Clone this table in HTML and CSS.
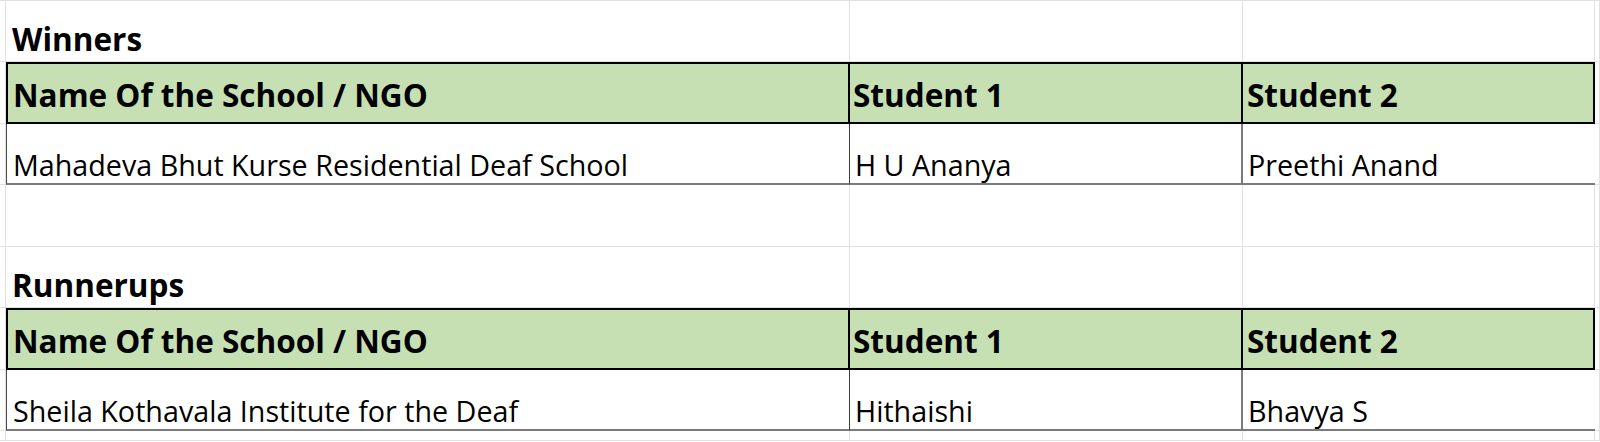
FILE: index.html
```html
<!DOCTYPE html>
<html>
<head>
<meta charset="utf-8">
<link rel="stylesheet" href="styles.css">
</head>
<body>
<div class="sheet">
  <div class="c edge"></div><div class="c title">Winners</div><div class="c"></div><div class="c"></div><div class="c tail"></div>

  <div class="c edge"></div><div class="c hd hd-a">Name Of the School / NGO</div><div class="c hd hd-b">Student 1</div><div class="c hd hd-c">Student 2</div><div class="c tail"></div>

  <div class="c edge"></div><div class="c dt dt-a">Mahadeva Bhut Kurse Residential Deaf School</div><div class="c dt dt-b">H U Ananya</div><div class="c dt dt-c">Preethi Anand</div><div class="c tail"></div>

  <div class="c edge"></div><div class="c"></div><div class="c"></div><div class="c"></div><div class="c tail"></div>

  <div class="c edge"></div><div class="c title">Runnerups</div><div class="c"></div><div class="c"></div><div class="c tail"></div>

  <div class="c edge"></div><div class="c hd hd-a">Name Of the School / NGO</div><div class="c hd hd-b">Student 1</div><div class="c hd hd-c">Student 2</div><div class="c tail"></div>

  <div class="c edge"></div><div class="c dt dt-a">Sheila Kothavala Institute for the Deaf</div><div class="c dt dt-b">Hithaishi</div><div class="c dt dt-c">Bhavya S</div><div class="c tail"></div>

  <div class="c edge"></div><div class="c"></div><div class="c"></div><div class="c"></div><div class="c tail"></div>
</div>
</body>
</html>
```

FILE: styles.css
```css
html, body {
  margin: 0;
  padding: 0;
  background: #ffffff;
}

body {
  width: 1600px;
  height: 442px;
  overflow: hidden;
  font-family: "Open Sans", "Liberation Sans", sans-serif;
  color: #000000;
}

.sheet {
  display: grid;
  grid-template-columns: 6px 844px 393px 352px 5px;
  grid-template-rows: 61px 62px 61px 62px 61px 62px 61px 10px;
  border-top: 1px solid #e1e1e1;
}

.c {
  box-sizing: border-box;
  box-shadow: inset -1px -1px 0 #e1e1e1;
  display: flex;
  align-items: flex-end;
  font-size: 28.7px;
  line-height: 1;
  white-space: nowrap;
  overflow: hidden;
}

.title {
  font-size: 31.5px;
  font-weight: 700;
  padding: 0 0 8px 6px;
}

.hd {
  background: #c6e0b4;
  box-shadow: none;
  font-size: 31.5px;
  font-weight: 700;
  align-items: center;
  padding-top: 4px;
  border-style: solid;
  border-color: #000000;
  border-width: 2px 2px 2px 0;
}

.hd-a {
  border-left-width: 2px;
  padding-left: 5px;
}

.hd-b {
  padding-left: 3px;
}

.hd-c {
  padding-left: 4px;
}

.dt {
  box-shadow: none;
  border-bottom: 2px solid #7b7b7b;
  padding-bottom: 3px;
}

.dt-a {
  border-left: 1px solid #4a4a4a;
  border-right: 1px solid #3c3c3c;
  padding-left: 6px;
}

.dt-b {
  border-right: 2px solid #7b7b7b;
  padding-left: 5px;
}

.dt-c {
  padding-left: 5px;
}
```
